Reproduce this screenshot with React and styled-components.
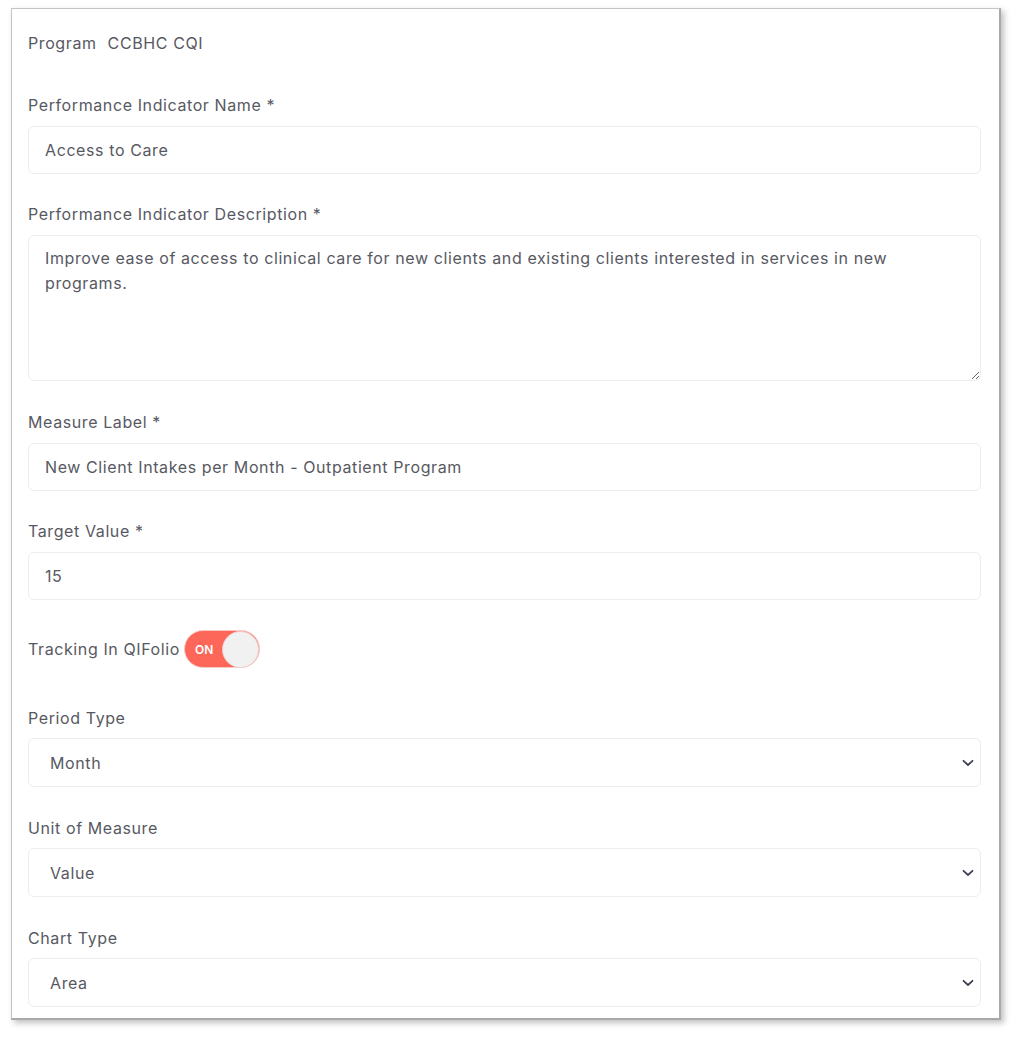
import React from "react";
import styled, { createGlobalStyle } from "styled-components";

const Global = createGlobalStyle`
  html, body { margin: 0; padding: 0; background: #ffffff; }
  body { font-family: "Inter", "Open Sans", sans-serif; }
  * { box-sizing: border-box; }
`;

const Page = styled.div`
  padding: 8px 0 0 11px;
  width: 1013px;
  height: 1037px;
`;

const Card = styled.form`
  width: 990px;
  height: 1012px;
  background: #fff;
  border: 1px solid #c4c4c4;
  border-right: 2px solid #a9a9a9;
  border-bottom: 2px solid #a9a9a9;
  box-shadow: 3px 3px 6px rgba(0, 0, 0, 0.25);
  padding: 23px 18px 0 16px;
  display: flex;
  flex-direction: column;
`;

const Text = `
  font-family: "Inter", "Open Sans", sans-serif;
  font-size: 16px;
  color: #575962;
  letter-spacing: 0.6px;
`;

const ProgramRow = styled.div`
  ${Text}
  line-height: 22px;
  display: flex;
  gap: 11px;
  margin-bottom: 40px;
`;

const Group = styled.div`
  display: flex;
  flex-direction: column;
  margin-bottom: ${(p) => p.$mb ?? 29}px;
`;

const Label = styled.label`
  ${Text}
  line-height: 22px;
  margin-bottom: ${(p) => p.$gap ?? 10}px;
`;

const Input = styled.input`
  ${Text}
  height: 48px;
  border: 1px solid #ebedf2;
  border-radius: 6px;
  padding: 0 16px;
  outline: none;
  background: #fff;
`;

const TextArea = styled.textarea`
  ${Text}
  height: 146px;
  border: 1px solid #ebedf2;
  border-radius: 6px;
  padding: 10px 16px;
  line-height: 25px;
  outline: none;
  resize: vertical;
`;

const SelectWrap = styled.div`
  position: relative;
  height: 49px;
`;

const Select = styled.select`
  ${Text}
  width: 100%;
  height: 100%;
  appearance: none;
  border: 1px solid #ebedf2;
  border-radius: 6px;
  padding: 0 40px 0 21px;
  background: #fff;
  outline: none;
`;

const Chevron = styled.svg`
  position: absolute;
  right: 7px;
  top: 50%;
  transform: translateY(-50%);
  pointer-events: none;
`;

const ToggleRow = styled.div`
  display: flex;
  align-items: center;
  gap: 4px;
  margin-top: 2px;
  margin-bottom: 39px;
`;

const ToggleLabel = styled.span`
  ${Text}
`;

const Switch = styled.div`
  width: 76px;
  height: 38px;
  border-radius: 19px;
  background: #fd675a;
  border: 1px solid #f6c9c4;
  display: flex;
  align-items: center;
  justify-content: space-between;
  padding: 0 0 0 10px;
`;

const SwitchText = styled.span`
  font-family: "Inter", "Open Sans", sans-serif;
  font-size: 12px;
  font-weight: 600;
  color: #fff;
`;

const Knob = styled.span`
  width: 37px;
  height: 37px;
  border-radius: 50%;
  background: #f1f1f1;
  border: 1px solid #eecfcb;
`;

function SelectField({ label, value, last }) {
  return (
    <Group $mb={last ? 0 : 30}>
      <Label $gap={9}>{label}</Label>
      <SelectWrap>
        <Select defaultValue={value}>
          <option>{value}</option>
        </Select>
        <Chevron width="12" height="8" viewBox="0 0 12 8">
          <path d="M1.5 1.8 L6 6 L10.5 1.8" fill="none" stroke="#3f4254" strokeWidth="1.8" strokeLinecap="round" strokeLinejoin="round" />
        </Chevron>
      </SelectWrap>
    </Group>
  );
}

export default function App() {
  return (
    <>
      <Global />
      <Page>
        <Card onSubmit={(e) => e.preventDefault()}>
          <ProgramRow>
            <span>Program</span>
            <span>CCBHC CQI</span>
          </ProgramRow>
          <Group>
            <Label>Performance Indicator Name *</Label>
            <Input defaultValue="Access to Care" />
          </Group>
          <Group $mb={30}>
            <Label>Performance Indicator Description *</Label>
            <TextArea defaultValue="Improve ease of access to clinical care for new clients and existing clients interested in services in new programs." />
          </Group>
          <Group>
            <Label>Measure Label *</Label>
            <Input defaultValue="New Client Intakes per Month - Outpatient Program" />
          </Group>
          <Group $mb={28}>
            <Label>Target Value *</Label>
            <Input defaultValue="15" />
          </Group>
          <ToggleRow>
            <ToggleLabel>Tracking In QIFolio</ToggleLabel>
            <Switch>
              <SwitchText>ON</SwitchText>
              <Knob />
            </Switch>
          </ToggleRow>
          <SelectField label="Period Type" value="Month" />
          <SelectField label="Unit of Measure" value="Value" />
          <SelectField label="Chart Type" value="Area" last />
        </Card>
      </Page>
    </>
  );
}
